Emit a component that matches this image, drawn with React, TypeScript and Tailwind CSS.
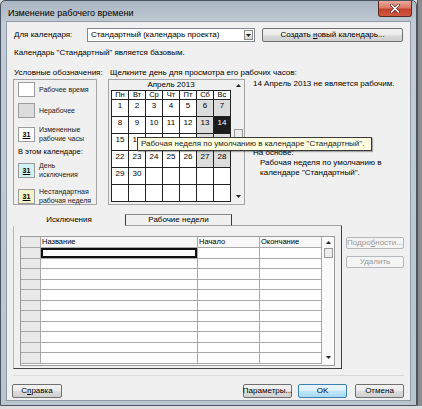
import type { ReactNode } from 'react'

const weeks: (number | null)[][] = [
  [1, 2, 3, 4, 5, 6, 7],
  [8, 9, 10, 11, 12, 13, 14],
  [15, 16, 17, 18, 19, 20, 21],
  [22, 23, 24, 25, 26, 27, 28],
  [29, 30, null, null, null, null, null],
  [null, null, null, null, null, null, null],
]
const days = ['Пн', 'Вт', 'Ср', 'Чт', 'Пт', 'Сб', 'Вс']

function Arrow({ down }: { down?: boolean }) {
  return (
    <svg width="5" height="3" viewBox="0 0 5 3">
      <path d={down ? 'M0 0h5L2.5 3z' : 'M0 3h5L2.5 0z'} fill="#222" />
    </svg>
  )
}

function Swatch({ className, mark }: { className: string; mark?: boolean }) {
  return (
    <div
      className={`flex h-[15px] w-[17px] shrink-0 items-center justify-center border border-[#9c9c9c] ${className}`}
    >
      {mark && <span className="text-[7px] font-bold leading-none underline">31</span>}
    </div>
  )
}

function Button({
  children,
  className = '',
  disabled,
  primary,
}: {
  children: ReactNode
  className?: string
  disabled?: boolean
  primary?: boolean
}) {
  let look =
    'border-[#707070] bg-[linear-gradient(180deg,#f2f2f2_0%,#ebebeb_50%,#dddddd_51%,#cfcfcf_100%)] text-black'
  if (disabled) look = 'border-[#b5b9bc] bg-[#f4f4f4] text-[#9a9a9a]'
  if (primary)
    look =
      'border-[#3c7fb1] bg-[linear-gradient(180deg,#eaf6fd_0%,#d9f0fc_50%,#bee6fd_51%,#a7d9f5_100%)] text-black'
  return (
    <div
      className={`flex shrink-0 items-center justify-center whitespace-nowrap rounded-[2px] border text-[8px] leading-none ${look} ${className}`}
    >
      {children}
    </div>
  )
}

function LegendItem({ swatch, children }: { swatch: ReactNode; children: ReactNode }) {
  return (
    <div className="flex shrink-0 items-center gap-[4px]">
      {swatch}
      <div className="whitespace-nowrap text-[7px] leading-[9px] text-[#1a1a1a]">{children}</div>
    </div>
  )
}

function Calendar() {
  return (
    <div className="ml-[11px] flex w-[137px] shrink-0 border border-[#a5a5a5]">
      <div className="ml-[2px] flex w-[120px] flex-col">
        <div className="flex h-[10px] shrink-0 items-center justify-center text-[8px] leading-none">
          Апрель 2013
        </div>
        <div className="grid shrink-0 grid-cols-7 border-l border-t border-[#222]">
          {days.map((d) => (
            <div
              key={d}
              className="flex h-[9px] items-center justify-center border-b border-r border-[#222] bg-white text-[7.5px] leading-none"
            >
              {d}
            </div>
          ))}
          {weeks.flat().map((n, i) => {
            const weekend = i % 7 >= 5 && n !== null
            let bg = 'bg-white text-black'
            if (weekend) bg = 'bg-[#dcdcdc] text-black'
            if (n === 14) bg = 'bg-[#1c1c1c] text-white'
            return (
              <div
                key={i}
                className={`h-[17px] border-b border-r border-[#222] pt-[2px] text-center text-[8px] leading-none ${bg}`}
              >
                {n}
              </div>
            )
          })}
        </div>
      </div>
      <div className="ml-[1px] flex w-[12px] flex-col items-center">
        <div className="flex h-[10px] items-center">
          <Arrow />
        </div>
        <div className="mt-[39px] h-[10px] w-[9px] border border-[#9a9a9a] bg-[#ececec]" />
        <div className="flex-1" />
        <div className="mb-[3px] flex h-[10px] items-center">
          <Arrow down />
        </div>
      </div>
    </div>
  )
}

function ExceptionsTable() {
  const rows = Array.from({ length: 11 }, (_, i) => i)
  return (
    <div className="ml-[6px] mt-[10px] flex h-[130px] w-[315px] border border-[#9a9a9a] bg-white">
      <div className="flex w-[301px] flex-col">
        <div className="flex h-[11px] shrink-0 text-[7.5px] leading-none">
          <div className="w-[20px] border-b border-r border-[#a8a8a8] bg-[#e9e9e9]" />
          <div className="flex w-[157px] items-center border-b border-r border-[#a8a8a8] bg-[#f7f7f7] pl-[1px]">
            Название
          </div>
          <div className="flex w-[62px] items-center border-b border-r border-[#a8a8a8] bg-[#f7f7f7] pl-[1px]">
            Начало
          </div>
          <div className="flex w-[62px] items-center border-b border-r border-[#a8a8a8] bg-[#f7f7f7] pl-[1px]">
            Окончание
          </div>
        </div>
        {rows.map((r) => (
          <div key={r} className="flex h-[10.5px] shrink-0">
            <div className="w-[20px] border-b border-r border-[#a8a8a8] bg-[#e9e9e9]" />
            <div
              className={`w-[157px] border-b border-r border-[#a8a8a8] ${r === 0 ? 'shadow-[inset_0_0_0_2px_#111]' : ''}`}
            />
            <div className="w-[62px] border-b border-r border-[#a8a8a8]" />
            <div className="w-[62px] border-b border-r border-[#a8a8a8]" />
          </div>
        ))}
      </div>
      <div className="flex w-[12px] flex-col items-center bg-[#fafafa]">
        <div className="flex h-[11px] items-center">
          <Arrow />
        </div>
        <div className="h-[10px] w-[9px] border border-[#9a9a9a] bg-[#ececec]" />
        <div className="flex-1" />
        <div className="mb-[3px] flex h-[10px] items-center">
          <Arrow down />
        </div>
      </div>
    </div>
  )
}

export default function App() {
  return (
    <div className="flex h-[409px] w-[422px] bg-[#dedede] font-['Liberation_Sans',Arial,sans-serif] text-black">
      <div className="flex h-[406px] w-[417px] shrink-0 flex-col rounded-t-[5px] border border-[#4b5562] bg-[linear-gradient(180deg,#aab6c3_0%,#c3ccd6_6%,#b9c4cf_100%)] px-[5px] pb-[4px]">
        <div className="flex h-[20px] shrink-0 items-start justify-between">
          <div className="ml-[2px] pt-[7px] text-[9px] leading-[10px] text-black">Изменение рабочего времени</div>
          <div className="mr-[-1px] flex h-[16px] w-[34px] items-center justify-center rounded-b-[3px] border border-t-0 border-[#5b2b24] bg-[linear-gradient(180deg,#eaa898_0%,#d97a66_45%,#c4412b_55%,#d3593f_100%)]">
            <svg width="10" height="9" viewBox="0 0 10 9">
              <path d="M1.5 1l7 7M8.5 1l-7 7" stroke="#5b2b24" strokeWidth="3" strokeLinecap="round" />
              <path d="M1.5 1l7 7M8.5 1l-7 7" stroke="#fff" strokeWidth="1.6" strokeLinecap="round" />
            </svg>
          </div>
        </div>

        <div className="relative flex h-[380px] shrink-0 flex-col border border-[#8e9aa8] bg-[#f0f0f0] px-[6px] pt-[6px] text-[8px] leading-[10px]">
          <div className="flex h-[14px] shrink-0 items-center">
            <div className="w-[74px] pl-[1px]">Для календаря:</div>
            <div className="flex h-[14px] w-[168px] items-center border border-[#828790] bg-white">
              <div className="flex-1 whitespace-nowrap pl-[3px]">Стандартный (календарь проекта)</div>
              <div className="mr-[1px] flex h-[10px] w-[9px] items-center justify-center border border-[#8a8a8a] bg-[linear-gradient(180deg,#f4f4f4,#d6d6d6)]">
                <Arrow down />
              </div>
            </div>
            <Button className="ml-[7px] h-[14px] w-[141px]">
              <span>
                Создать <span className="underline">н</span>овый календарь...
              </span>
            </Button>
          </div>

          <div className="mt-[6px] h-[10px] shrink-0 pl-[1px]">Календарь "Стандартный" является базовым.</div>

          <div className="mt-[10px] flex h-[10px] shrink-0 whitespace-nowrap">
            <div className="w-[97px] pl-[1px]">Условные обозначения:</div>
            <div>Щелкните день для просмотра его рабочих часов:</div>
          </div>

          <div className="mt-[1px] flex h-[126px] shrink-0">
            <div className="flex w-[84px] shrink-0 flex-col border border-[#a5a5a5] px-[4px] pt-[2px]">
              <LegendItem swatch={<Swatch className="bg-white" />}>Рабочее время</LegendItem>
              <div className="mt-[6px]">
                <LegendItem swatch={<Swatch className="bg-[#dcdcdc]" />}>Нерабочее</LegendItem>
              </div>
              <div className="mt-[7px]">
                <LegendItem swatch={<Swatch className="bg-white" mark />}>
                  Измененные
                  <br />
                  рабочие часы
                </LegendItem>
              </div>
              <div className="mt-[4px] h-[10px] whitespace-nowrap text-[7.5px] leading-[10px]">
                В этом календаре:
              </div>
              <div className="mt-[4px]">
                <LegendItem swatch={<Swatch className="bg-[#cdf3f3]" mark />}>
                  День
                  <br />
                  исключения
                </LegendItem>
              </div>
              <div className="mt-[8px]">
                <LegendItem swatch={<Swatch className="bg-[#f3f3c9]" mark />}>
                  Нестандартная
                  <br />
                  рабочая неделя
                </LegendItem>
              </div>
            </div>

            <Calendar />

            <div className="ml-[8px] flex flex-1 flex-col whitespace-nowrap">
              <div>14 Апрель 2013 не является рабочим.</div>
              <div className="mt-[59px]">На основе:</div>
              <div className="pl-[7px]">
                Рабочая неделя по умолчанию в
                <br />
                календаре "Стандартный".
              </div>
            </div>
          </div>

          <div className="mt-[8px] flex h-[13px] w-[329px] shrink-0">
            <div className="flex w-[112px] items-center justify-center">Исключения</div>
            <div className="mt-[1px] flex w-[107px] items-center justify-center border-x border-t border-[#8a8a8a] border-x-[#3a3a3a] border-b border-b-[#a0a0a0]">
              Рабочие недели
            </div>
            <div className="flex-1 border-b border-[#a0a0a0]" />
          </div>

          <div className="flex h-[143px] shrink-0">
            <div className="h-[143px] w-[329px] border-b border-l border-r border-[#3f3f3f] border-l-[#b8b8b8]">
              <ExceptionsTable />
            </div>
            <div className="ml-[4px] flex flex-col pt-[11px]">
              <Button disabled className="h-[12px] w-[58px]">
                <span>
                  Подро<span className="underline">б</span>ности...
                </span>
              </Button>
              <Button disabled className="mt-[7px] h-[12px] w-[58px]">
                Удалить
              </Button>
            </div>
          </div>

          <div className="mt-[6px] shrink-0 border-t border-[#dadada]" />

          <div className="mt-[8px] flex h-[14px] shrink-0">
            <Button className="ml-[-1px] h-[14px] w-[50px]">
              <span>
                С<span className="underline">п</span>равка
              </span>
            </Button>
            <div className="flex-1" />
            <Button className="h-[14px] w-[49px]">Параметры...</Button>
            <Button primary className="ml-[6px] h-[14px] w-[49px]">
              OK
            </Button>
            <Button className="ml-[8px] h-[14px] w-[49px]">Отмена</Button>
          </div>

          <div className="absolute left-[130px] top-[115px] flex h-[14px] w-[235px] items-center whitespace-nowrap border border-[#3a3a3a] bg-[#ffffe1] pl-[3px] text-[8px] leading-none text-[#1a1a1a] shadow-[1px_1px_1px_rgba(0,0,0,0.3)]">
            Рабочая неделя по умолчанию в календаре "Стандартный".
          </div>
        </div>
      </div>
      <div className="h-[406px] w-[5px] shrink-0 border-l border-[#555] bg-[#8c8c8c]" />
    </div>
  )
}
